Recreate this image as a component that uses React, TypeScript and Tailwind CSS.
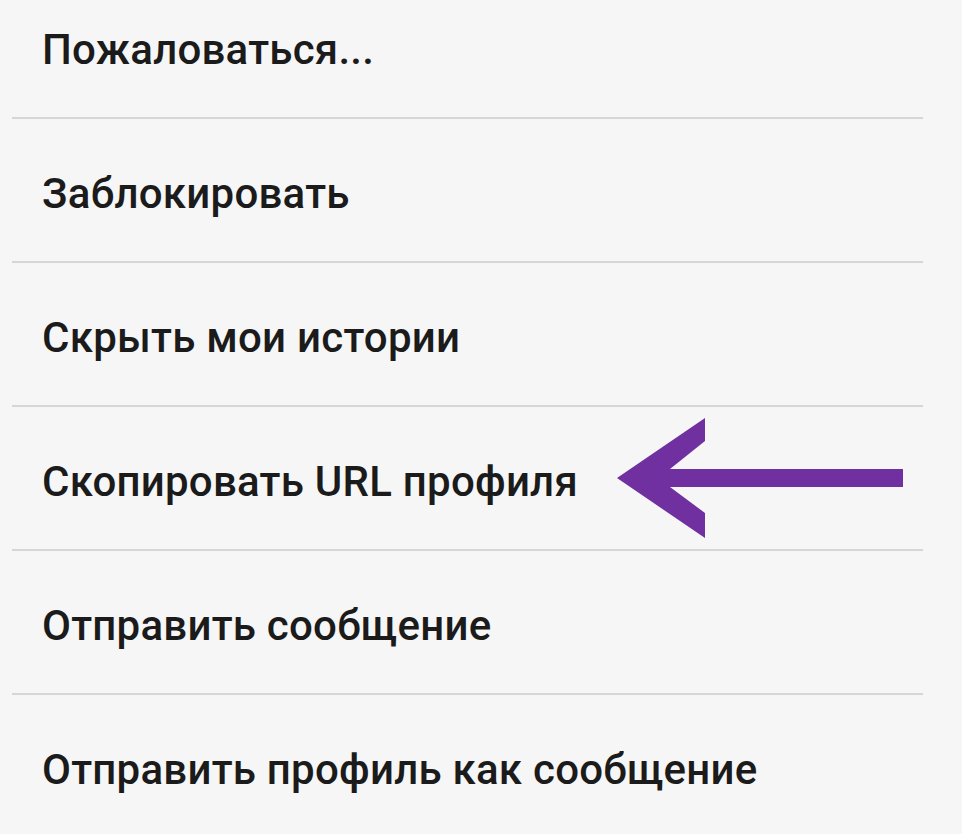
import React from 'react';

const items = [
  'Пожаловаться...',
  'Заблокировать',
  'Скрыть мои истории',
  'Скопировать URL профиля',
  'Отправить сообщение',
  'Отправить профиль как сообщение',
];

const Arrow = () => (
  <svg
    className="absolute left-[593px] top-[11px] h-[120px] w-[300px]"
    viewBox="605 420 300 120"
  >
    <polygon
      fill="#7030a0"
      points="617,480 705,420 705,443 670,471 903,471 903,489 670,489 705,515 705,540"
    />
  </svg>
);

export default function App() {
  return (
    <div className="flex h-[834px] w-[980px] bg-white">
      <div
        className="flex w-[962px] flex-col bg-[#f6f6f6] px-3 text-[#1b1b1b]"
        style={{ fontFamily: 'Roboto, "Noto Sans", sans-serif' }}
      >
        {items.map((label, i) => (
          <div key={label} className="flex flex-col">
            {i > 0 && <div className="h-[2px] w-[911px] bg-[#d6d6d6]" />}
            <div
              className={
                i === 0
                  ? 'relative flex h-[117px] items-center pb-[18px] pl-[30px]'
                  : 'relative flex h-[142px] items-center pt-[8px] pl-[30px]'
              }
            >
              <span className="text-[42px] font-medium leading-none tracking-[0.25px]">
                {label}
              </span>
              {i === 3 && <Arrow />}
            </div>
          </div>
        ))}
      </div>
    </div>
  );
}
